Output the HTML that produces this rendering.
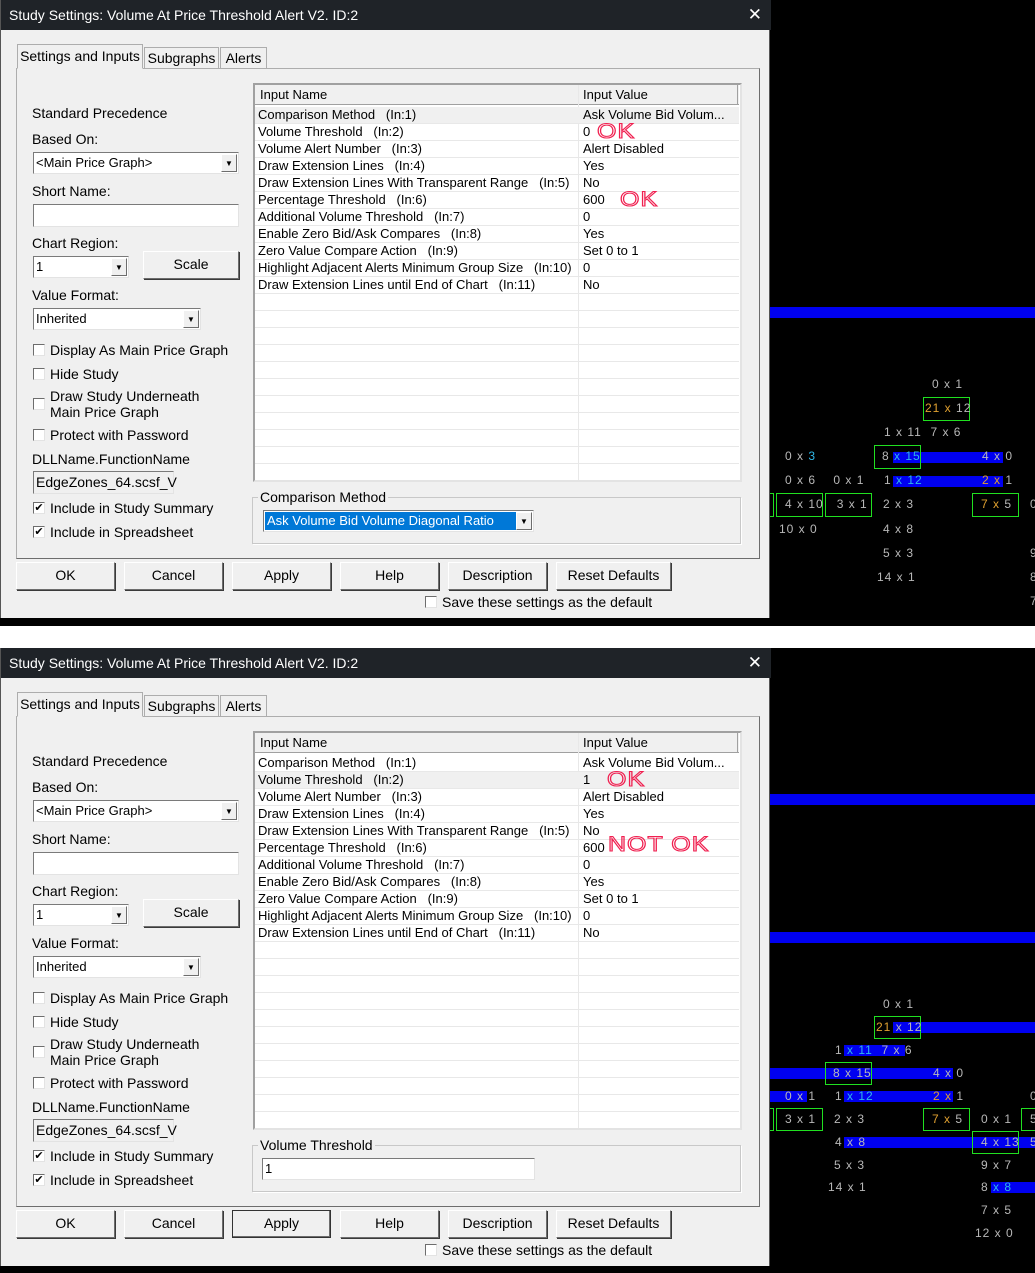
<!DOCTYPE html>
<html><head><meta charset="utf-8">
<style>
*{box-sizing:border-box;margin:0;padding:0}
body{width:1035px;height:1273px;background:#fff;position:relative;overflow:hidden;font-family:"Liberation Sans",Arial,sans-serif;font-size:13px;color:#000}
.blk{position:absolute;background:#000}
.dlg{position:absolute;left:0;width:770px;height:618px;background:#f0f0f0;border-left:1px solid #555;border-right:1px solid #555}
.title{position:absolute;left:0;top:0;width:770px;height:30px;background:#1f2328;color:#fff;font-size:14px;line-height:30px;padding-left:8px}
.title .x{position:absolute;right:9px;top:0;font-size:17px}
.a{position:absolute;white-space:nowrap}
.tab{position:absolute;border:1px solid #adadad;border-bottom:none;background:#f0f0f0;text-align:center;line-height:20px}
.panel{position:absolute;left:15px;top:68px;width:744px;height:491px;border:1px solid #adadad;border-right-color:#6d6d6d;border-bottom-color:#6d6d6d}
.combo{position:absolute;background:#fff;border:1px solid #7a7a7a;border-right-color:#e3e3e3;border-bottom-color:#e3e3e3;height:22px;line-height:19px;padding-left:2px}
.combo .ar{position:absolute;right:1px;top:1px;width:16px;height:18px;background:#f0f0f0;border:1px solid #fff;border-right-color:#6d6d6d;border-bottom-color:#6d6d6d;font-size:8px;text-align:center;line-height:17px}
.tb{position:absolute;background:#fff;border:1px solid #7a7a7a;border-right-color:#e3e3e3;border-bottom-color:#e3e3e3;height:23px;line-height:20px;padding-left:2px}
.btn{position:absolute;height:28px;background:#f0f0f0;border:1px solid #fff;border-right-color:#6d6d6d;border-bottom-color:#6d6d6d;box-shadow:1px 1px 0 #3a3a3a;text-align:center;line-height:25px;font-size:14px}
.cb{position:absolute;width:12px;height:12px;background:#fff;border:1px solid #6d6d6d;border-right-color:#e3e3e3;border-bottom-color:#e3e3e3;font-size:11px;line-height:10px;text-align:center}
.tbl{position:absolute;left:252px;top:83px;width:489px;height:399px;background:#fff;border:2px solid #a0a0a0;border-right-color:#e3e3e3;border-bottom-color:#e3e3e3;overflow:hidden}
.hdr{position:absolute;left:0;top:0;width:484px;height:20px;background:#f0f0f0;border-bottom:1px solid #a0a0a0}
.row{position:absolute;left:0;width:484px;height:17px;border-bottom:1px solid #e8e8e8;line-height:16px}
.row span{position:absolute;white-space:nowrap}
.vl{position:absolute;left:323px;top:0;width:1px;height:400px;background:#e8e8e8}
.grp{position:absolute;left:251px;width:489px;border:1px solid #c8c8c8;box-shadow:1px 1px 0 #fff}
.grpl{position:absolute;background:#f0f0f0;padding:0 2px;font-size:14px}
.red{position:absolute;color:transparent;-webkit-text-stroke:1.3px #f02050;font-size:25px;font-weight:normal;letter-spacing:1px;line-height:22px;white-space:nowrap;transform:scaleY(0.85);transform-origin:left top}
.c{position:absolute;font-size:12px;color:#b8b8b8;white-space:nowrap;line-height:14px;letter-spacing:1px}
.o{color:#e0a030}.cy{color:#30b8e8}
.bb{position:absolute;background:#0000f0}
.gb{position:absolute;border:1px solid #20e020}
</style></head><body>

<div class="blk" style="left:0;top:0;width:1035px;height:626px"></div>
<div class="blk" style="left:0;top:648px;width:1035px;height:625px"></div>

<!-- top chart -->
<div class="bb" style="left:770px;top:307px;width:265px;height:11px"></div>
<div class="c" style="left:932px;top:377px">0 x 1</div>
<div class="gb" style="left:923px;top:397px;width:47px;height:24px"></div>
<div class="c" style="left:925px;top:401px"><span class="o">21 x</span> 12</div>
<div class="c" style="left:884px;top:425px">1 x 11&nbsp;&nbsp;7 x 6</div>
<div class="c" style="left:785px;top:449px">0 x <span class="cy">3</span></div>
<div class="bb" style="left:893px;top:452px;width:110px;height:11px"></div>
<div class="gb" style="left:874px;top:445px;width:47px;height:24px"></div>
<div class="c" style="left:882px;top:449px">8 <span class="cy">x 15</span></div>
<div class="c" style="left:982px;top:449px">4 x 0</div>
<div class="c" style="left:785px;top:473px">0 x 6&nbsp;&nbsp;&nbsp;&nbsp;0 x 1</div>
<div class="bb" style="left:893px;top:476px;width:110px;height:11px"></div>
<div class="c" style="left:884px;top:473px">1 <span class="cy">x 12</span></div>
<div class="c" style="left:982px;top:473px"><span class="o">2 x</span> 1</div>
<div class="gb" style="left:765px;top:493px;width:9px;height:24px"></div>
<div class="gb" style="left:776px;top:493px;width:47px;height:24px"></div>
<div class="gb" style="left:825px;top:493px;width:47px;height:24px"></div>
<div class="gb" style="left:972px;top:493px;width:47px;height:24px"></div>
<div class="c" style="left:785px;top:497px">4 x 10&nbsp;&nbsp;&nbsp;3 x 1</div>
<div class="c" style="left:883px;top:497px">2 x 3</div>
<div class="c" style="left:981px;top:497px"><span class="o">7 x</span> 5</div>
<div class="c" style="left:1030px;top:497px">0</div>
<div class="c" style="left:779px;top:522px">10 x 0</div>
<div class="c" style="left:883px;top:522px">4 x 8</div>
<div class="c" style="left:883px;top:546px">5 x 3</div>
<div class="c" style="left:877px;top:570px">14 x 1</div>
<div class="c" style="left:1030px;top:546px">9</div>
<div class="c" style="left:1030px;top:570px">8</div>
<div class="c" style="left:1030px;top:594px">7</div>

<!-- bottom chart -->
<div class="bb" style="left:770px;top:794px;width:265px;height:11px"></div>
<div class="bb" style="left:770px;top:932px;width:265px;height:11px"></div>
<div class="c" style="left:883px;top:997px">0 x 1</div>
<div class="bb" style="left:893px;top:1022px;width:142px;height:11px"></div>
<div class="gb" style="left:874px;top:1016px;width:47px;height:23px"></div>
<div class="c" style="left:876px;top:1020px"><span class="o">21</span> x 12</div>
<div class="bb" style="left:844px;top:1045px;width:61px;height:11px"></div>
<div class="c" style="left:835px;top:1043px">1 <span class="cy">x 11</span>&nbsp;&nbsp;7 x 6</div>
<div class="bb" style="left:770px;top:1068px;width:183px;height:11px"></div>
<div class="gb" style="left:825px;top:1062px;width:47px;height:23px"></div>
<div class="c" style="left:833px;top:1066px">8 x 15</div>
<div class="c" style="left:933px;top:1066px">4 x 0</div>
<div class="bb" style="left:770px;top:1091px;width:37px;height:11px"></div>
<div class="c" style="left:785px;top:1089px">0 x 1</div>
<div class="bb" style="left:844px;top:1091px;width:109px;height:11px"></div>
<div class="c" style="left:835px;top:1089px">1 <span class="cy">x 12</span></div>
<div class="c" style="left:933px;top:1089px"><span class="o">2 x</span> 1</div>
<div class="c" style="left:1030px;top:1089px">0</div>
<div class="gb" style="left:765px;top:1108px;width:9px;height:23px"></div>
<div class="gb" style="left:776px;top:1108px;width:47px;height:23px"></div>
<div class="c" style="left:785px;top:1112px">3 x 1</div>
<div class="c" style="left:834px;top:1112px">2 x 3</div>
<div class="gb" style="left:923px;top:1108px;width:47px;height:23px"></div>
<div class="c" style="left:932px;top:1112px"><span class="o">7 x</span> 5</div>
<div class="c" style="left:981px;top:1112px">0 x 1</div>
<div class="gb" style="left:1021px;top:1108px;width:20px;height:23px"></div>
<div class="c" style="left:1030px;top:1112px">5</div>
<div class="bb" style="left:844px;top:1137px;width:191px;height:11px"></div>
<div class="c" style="left:835px;top:1135px">4 x 8</div>
<div class="gb" style="left:972px;top:1131px;width:47px;height:23px"></div>
<div class="c" style="left:981px;top:1135px">4 x 13</div>
<div class="c" style="left:1030px;top:1135px">5</div>
<div class="c" style="left:834px;top:1158px">5 x 3</div>
<div class="c" style="left:981px;top:1158px">9 x 7</div>
<div class="c" style="left:828px;top:1180px">14 x 1</div>
<div class="bb" style="left:991px;top:1182px;width:44px;height:11px"></div>
<div class="c" style="left:981px;top:1180px">8 <span class="cy">x 8</span></div>
<div class="c" style="left:981px;top:1203px">7 x 5</div>
<div class="c" style="left:975px;top:1226px">12 x 0</div>

<!-- ===== TOP DIALOG ===== -->
<div class="dlg" style="top:0">
<div class="title">Study Settings: Volume At Price Threshold Alert V2. ID:2<span class="x">✕</span></div>
<div class="panel"></div>
<div class="tab" style="left:16px;top:44px;width:126px;height:25px;border-bottom:1px solid #f0f0f0;line-height:22px;font-size:14px">Settings and Inputs</div>
<div class="tab" style="left:143px;top:47px;width:75px;height:21px;font-size:14px">Subgraphs</div>
<div class="tab" style="left:219px;top:47px;width:47px;height:21px;font-size:14px">Alerts</div>

<div class="a" style="left:31px;top:105px;font-size:14px">Standard Precedence</div>
<div class="a" style="left:31px;top:131px;font-size:14px">Based On:</div>
<div class="combo" style="left:32px;top:152px;width:206px">&lt;Main Price Graph&gt;<div class="ar">▼</div></div>
<div class="a" style="left:31px;top:183px;font-size:14px">Short Name:</div>
<div class="tb" style="left:32px;top:204px;width:206px"></div>
<div class="a" style="left:31px;top:235px;font-size:14px">Chart Region:</div>
<div class="combo" style="left:32px;top:256px;width:96px">1<div class="ar">▼</div></div>
<div class="btn" style="left:142px;top:251px;width:96px">Scale</div>
<div class="a" style="left:31px;top:287px;font-size:14px">Value Format:</div>
<div class="combo" style="left:32px;top:308px;width:168px">Inherited<div class="ar">▼</div></div>
<div class="cb" style="left:32px;top:344px"></div><div class="a" style="left:49px;top:342px;font-size:14px">Display As Main Price Graph</div>
<div class="cb" style="left:32px;top:368px"></div><div class="a" style="left:49px;top:366px;font-size:14px">Hide Study</div>
<div class="cb" style="left:32px;top:398px"></div><div class="a" style="left:49px;top:388px;font-size:14px;line-height:16px">Draw Study Underneath<br>Main Price Graph</div>
<div class="cb" style="left:32px;top:429px"></div><div class="a" style="left:49px;top:427px;font-size:14px">Protect with Password</div>
<div class="a" style="left:31px;top:451px;font-size:14px">DLLName.FunctionName</div>
<div class="tb" style="left:32px;top:471px;width:141px;background:#f0f0f0;font-size:14px">EdgeZones_64.scsf_V</div>
<div class="cb" style="left:32px;top:502px">✔</div><div class="a" style="left:49px;top:500px;font-size:14px">Include in Study Summary</div>
<div class="cb" style="left:32px;top:526px">✔</div><div class="a" style="left:49px;top:524px;font-size:14px">Include in Spreadsheet</div>

<div class="tbl">
 <div class="hdr"><span class="a" style="left:5px;top:2px">Input Name</span><span class="a" style="left:323px;top:0;width:1px;height:20px;background:#a0a0a0"></span><span class="a" style="left:328px;top:2px">Input Value</span><span class="a" style="left:482px;top:0;width:1px;height:20px;background:#a0a0a0"></span></div>
 <div class="vl"></div>
 <div class="row" style="top:22px;background:#f0f0f0"><span style="left:3px">Comparison Method&nbsp;&nbsp; (In:1)</span><span style="left:328px">Ask Volume Bid Volum...</span></div>
 <div class="row" style="top:39px"><span style="left:3px">Volume Threshold&nbsp;&nbsp; (In:2)</span><span style="left:328px">0</span></div>
 <div class="row" style="top:56px"><span style="left:3px">Volume Alert Number&nbsp;&nbsp; (In:3)</span><span style="left:328px">Alert Disabled</span></div>
 <div class="row" style="top:73px"><span style="left:3px">Draw Extension Lines&nbsp;&nbsp; (In:4)</span><span style="left:328px">Yes</span></div>
 <div class="row" style="top:90px"><span style="left:3px">Draw Extension Lines With Transparent Range&nbsp;&nbsp; (In:5)</span><span style="left:328px">No</span></div>
 <div class="row" style="top:107px"><span style="left:3px">Percentage Threshold&nbsp;&nbsp; (In:6)</span><span style="left:328px">600</span></div>
 <div class="row" style="top:124px"><span style="left:3px">Additional Volume Threshold&nbsp;&nbsp; (In:7)</span><span style="left:328px">0</span></div>
 <div class="row" style="top:141px"><span style="left:3px">Enable Zero Bid/Ask Compares&nbsp;&nbsp; (In:8)</span><span style="left:328px">Yes</span></div>
 <div class="row" style="top:158px"><span style="left:3px">Zero Value Compare Action&nbsp;&nbsp; (In:9)</span><span style="left:328px">Set 0 to 1</span></div>
 <div class="row" style="top:175px"><span style="left:3px">Highlight Adjacent Alerts Minimum Group Size&nbsp;&nbsp; (In:10)</span><span style="left:328px">0</span></div>
 <div class="row" style="top:192px"><span style="left:3px">Draw Extension Lines until End of Chart&nbsp;&nbsp; (In:11)</span><span style="left:328px">No</span></div>
 <div class="row" style="top:209px"></div><div class="row" style="top:226px"></div><div class="row" style="top:243px"></div><div class="row" style="top:260px"></div><div class="row" style="top:277px"></div><div class="row" style="top:294px"></div><div class="row" style="top:311px"></div><div class="row" style="top:328px"></div><div class="row" style="top:345px"></div><div class="row" style="top:362px"></div><div class="row" style="top:379px"></div>
</div>
<div class="red" style="left:596px;top:122px">OK</div>
<div class="red" style="left:619px;top:190px">OK</div>

<div class="grp" style="top:497px;height:47px"></div>
<div class="grpl" style="left:257px;top:489px">Comparison Method</div>
<div class="combo" style="left:262px;top:510px;width:271px;height:22px"><div class="a" style="left:1px;top:1px;width:253px;height:18px;background:#0078d7;color:#fff;padding-left:2px;line-height:18px">Ask Volume Bid Volume Diagonal Ratio</div><div class="ar">▼</div></div>

<div class="btn" style="left:15px;top:562px;width:99px">OK</div>
<div class="btn" style="left:123px;top:562px;width:99px">Cancel</div>
<div class="btn" style="left:231px;top:562px;width:99px">Apply</div>
<div class="btn" style="left:339px;top:562px;width:99px">Help</div>
<div class="btn" style="left:447px;top:562px;width:99px">Description</div>
<div class="btn" style="left:555px;top:562px;width:115px">Reset Defaults</div>
<div class="cb" style="left:424px;top:596px"></div><div class="a" style="left:441px;top:594px;font-size:14px">Save these settings as the default</div>
</div>

<!-- ===== BOTTOM DIALOG ===== -->
<div class="dlg" style="top:648px">
<div class="title">Study Settings: Volume At Price Threshold Alert V2. ID:2<span class="x">✕</span></div>
<div class="panel"></div>
<div class="tab" style="left:16px;top:44px;width:126px;height:25px;border-bottom:1px solid #f0f0f0;line-height:22px;font-size:14px">Settings and Inputs</div>
<div class="tab" style="left:143px;top:47px;width:75px;height:21px;font-size:14px">Subgraphs</div>
<div class="tab" style="left:219px;top:47px;width:47px;height:21px;font-size:14px">Alerts</div>

<div class="a" style="left:31px;top:105px;font-size:14px">Standard Precedence</div>
<div class="a" style="left:31px;top:131px;font-size:14px">Based On:</div>
<div class="combo" style="left:32px;top:152px;width:206px">&lt;Main Price Graph&gt;<div class="ar">▼</div></div>
<div class="a" style="left:31px;top:183px;font-size:14px">Short Name:</div>
<div class="tb" style="left:32px;top:204px;width:206px"></div>
<div class="a" style="left:31px;top:235px;font-size:14px">Chart Region:</div>
<div class="combo" style="left:32px;top:256px;width:96px">1<div class="ar">▼</div></div>
<div class="btn" style="left:142px;top:251px;width:96px">Scale</div>
<div class="a" style="left:31px;top:287px;font-size:14px">Value Format:</div>
<div class="combo" style="left:32px;top:308px;width:168px">Inherited<div class="ar">▼</div></div>
<div class="cb" style="left:32px;top:344px"></div><div class="a" style="left:49px;top:342px;font-size:14px">Display As Main Price Graph</div>
<div class="cb" style="left:32px;top:368px"></div><div class="a" style="left:49px;top:366px;font-size:14px">Hide Study</div>
<div class="cb" style="left:32px;top:398px"></div><div class="a" style="left:49px;top:388px;font-size:14px;line-height:16px">Draw Study Underneath<br>Main Price Graph</div>
<div class="cb" style="left:32px;top:429px"></div><div class="a" style="left:49px;top:427px;font-size:14px">Protect with Password</div>
<div class="a" style="left:31px;top:451px;font-size:14px">DLLName.FunctionName</div>
<div class="tb" style="left:32px;top:471px;width:141px;background:#f0f0f0;font-size:14px">EdgeZones_64.scsf_V</div>
<div class="cb" style="left:32px;top:502px">✔</div><div class="a" style="left:49px;top:500px;font-size:14px">Include in Study Summary</div>
<div class="cb" style="left:32px;top:526px">✔</div><div class="a" style="left:49px;top:524px;font-size:14px">Include in Spreadsheet</div>

<div class="tbl">
 <div class="hdr"><span class="a" style="left:5px;top:2px">Input Name</span><span class="a" style="left:323px;top:0;width:1px;height:20px;background:#a0a0a0"></span><span class="a" style="left:328px;top:2px">Input Value</span><span class="a" style="left:482px;top:0;width:1px;height:20px;background:#a0a0a0"></span></div>
 <div class="vl"></div>
 <div class="row" style="top:22px"><span style="left:3px">Comparison Method&nbsp;&nbsp; (In:1)</span><span style="left:328px">Ask Volume Bid Volum...</span></div>
 <div class="row" style="top:39px;background:#f0f0f0"><span style="left:3px">Volume Threshold&nbsp;&nbsp; (In:2)</span><span style="left:328px">1</span></div>
 <div class="row" style="top:56px"><span style="left:3px">Volume Alert Number&nbsp;&nbsp; (In:3)</span><span style="left:328px">Alert Disabled</span></div>
 <div class="row" style="top:73px"><span style="left:3px">Draw Extension Lines&nbsp;&nbsp; (In:4)</span><span style="left:328px">Yes</span></div>
 <div class="row" style="top:90px"><span style="left:3px">Draw Extension Lines With Transparent Range&nbsp;&nbsp; (In:5)</span><span style="left:328px">No</span></div>
 <div class="row" style="top:107px"><span style="left:3px">Percentage Threshold&nbsp;&nbsp; (In:6)</span><span style="left:328px">600</span></div>
 <div class="row" style="top:124px"><span style="left:3px">Additional Volume Threshold&nbsp;&nbsp; (In:7)</span><span style="left:328px">0</span></div>
 <div class="row" style="top:141px"><span style="left:3px">Enable Zero Bid/Ask Compares&nbsp;&nbsp; (In:8)</span><span style="left:328px">Yes</span></div>
 <div class="row" style="top:158px"><span style="left:3px">Zero Value Compare Action&nbsp;&nbsp; (In:9)</span><span style="left:328px">Set 0 to 1</span></div>
 <div class="row" style="top:175px"><span style="left:3px">Highlight Adjacent Alerts Minimum Group Size&nbsp;&nbsp; (In:10)</span><span style="left:328px">0</span></div>
 <div class="row" style="top:192px"><span style="left:3px">Draw Extension Lines until End of Chart&nbsp;&nbsp; (In:11)</span><span style="left:328px">No</span></div>
 <div class="row" style="top:209px"></div><div class="row" style="top:226px"></div><div class="row" style="top:243px"></div><div class="row" style="top:260px"></div><div class="row" style="top:277px"></div><div class="row" style="top:294px"></div><div class="row" style="top:311px"></div><div class="row" style="top:328px"></div><div class="row" style="top:345px"></div><div class="row" style="top:362px"></div><div class="row" style="top:379px"></div>
</div>
<div class="red" style="left:606px;top:122px">OK</div>
<div class="red" style="left:607px;top:187px">NOT OK</div>

<div class="grp" style="top:497px;height:47px"></div>
<div class="grpl" style="left:257px;top:489px">Volume Threshold</div>
<div class="tb" style="left:261px;top:510px;width:273px;height:22px">1</div>

<div class="btn" style="left:15px;top:562px;width:99px">OK</div>
<div class="btn" style="left:123px;top:562px;width:99px">Cancel</div>
<div class="btn" style="left:231px;top:562px;width:99px;border:1px solid #333;box-shadow:inset -1px -1px 0 #6d6d6d">Apply</div>
<div class="btn" style="left:339px;top:562px;width:99px">Help</div>
<div class="btn" style="left:447px;top:562px;width:99px">Description</div>
<div class="btn" style="left:555px;top:562px;width:115px">Reset Defaults</div>
<div class="cb" style="left:424px;top:596px"></div><div class="a" style="left:441px;top:594px;font-size:14px">Save these settings as the default</div>
</div>

</body></html>
